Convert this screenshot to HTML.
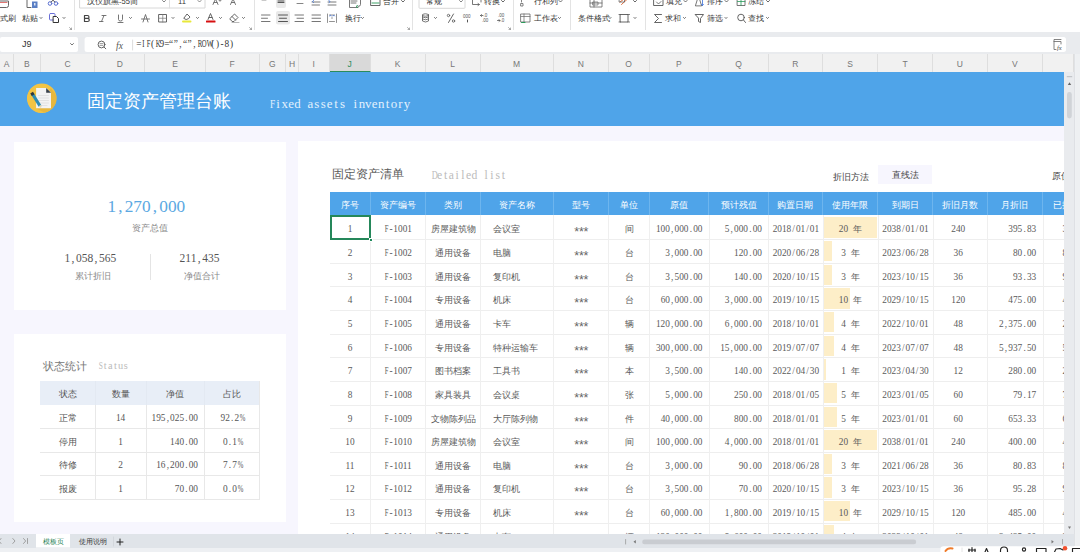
<!DOCTYPE html>
<html><head><meta charset="utf-8">
<style>
*{margin:0;padding:0;box-sizing:border-box}
html,body{width:1080px;height:552px;overflow:hidden;background:#fff;font-family:"Liberation Sans",sans-serif}
.a{position:absolute}
#tb{position:absolute;left:0;top:0;width:1080px;height:32px;background:#fff;overflow:hidden}
.tt{position:absolute;font-size:7.6px;color:#333;white-space:nowrap;line-height:12px}
.sep{position:absolute;top:0;width:1px;height:30px;background:#e3e3e3}
.dd{position:absolute;font-size:7px;color:#555;line-height:8px}
.ic{position:absolute}
#gband{position:absolute;left:0;top:32px;width:1080px;height:22px;background:#e9ebee}
#namebox{position:absolute;left:0;top:37px;width:78px;height:15px;background:#fff;border-radius:0 3px 3px 0}
#fbox{position:absolute;left:84.6px;top:37px;width:981px;height:15px;background:#fff;border-radius:3px}
#colhdr{position:absolute;left:0;top:54px;width:1074px;height:18px;background:#f1f1f1}
.ch{position:absolute;top:0;height:18px;border-right:1px solid #dedede;font-size:8.5px;color:#777;text-align:center;line-height:20px}
.ch.sel{background:#d9d9d9;color:#2a8c5c;border-bottom:1.5px solid #2a8c5c}
#sheet{position:absolute;left:0;top:72px;width:1064px;height:462px;background:#f7f6fe;overflow:hidden}
#banner{position:absolute;left:0;top:0;width:1064px;height:54px;background:#4fa4e9}
.card{position:absolute;background:#fff}
.th{position:absolute;background:#4fa4e9;color:#fff;font-size:9.3px;text-align:center;line-height:26px;border-right:1px solid #6db5ee;font-family:"Liberation Serif",serif}
.td{position:absolute;font-size:9.3px;color:#5a5a5a;line-height:28px;white-space:nowrap;overflow:hidden;font-family:"Liberation Serif",serif}
.td.c{text-align:center}
.td.l{text-align:left;padding-left:12px}
.td.r{text-align:right;padding-right:6.8px}
.td.w{text-align:left;padding-left:19.5px}
.m{font-family:"Liberation Serif",serif}
i.p{display:inline-block;width:0.5em;text-align:center;font-style:normal}
i.s{font-family:"Liberation Sans",sans-serif;position:relative;top:3px;font-size:12.5px;width:4.65px;color:#666}
i.gap{display:inline-block;width:5px}
i.u{transform:scaleX(0.72)}
.rline{position:absolute;left:329.5px;width:740px;height:1px;background:#eeeeee}
.vline{position:absolute;width:1px;background:#efefef}
.bar{position:absolute;background:#fdeec8}
.std{position:absolute;font-size:9.3px;color:#555;line-height:26px;white-space:nowrap;font-family:"Liberation Serif",serif}
.std.c{text-align:center}
.std.r{text-align:right;padding-right:6.8px}
.sthbg{position:absolute;background:#e8eef7}
.sline{position:absolute;height:1px;background:#e8e8e8}
.svline{position:absolute;width:1px;background:#e8e8e8}
#tabbar{position:absolute;left:0;top:534px;width:1074.3px;height:13.5px;background:#e0e4e9}
#bstrip{position:absolute;left:0;top:547.5px;width:1080px;height:4.5px;background:#eef0f3}
#vscroll{position:absolute;left:1064px;top:54px;width:16px;height:480px;background:#e9ebef}
</style></head><body>
<div id="tb">
  <div class="sep" style="left:74.0px"></div>
  <div class="sep" style="left:254.0px"></div>
  <div class="sep" style="left:412.0px"></div>
  <div class="sep" style="left:513.0px"></div>
  <div class="sep" style="left:570.0px"></div>
  <div class="sep" style="left:645.0px"></div>
<svg class="a" style="left:0;top:0" width="1080" height="32" viewBox="0 0 1080 32" fill="none" stroke-linecap="round" stroke-linejoin="round">
<!-- format painter -->
<path d="M0 1 H8.5 V5.5 Q8.5 7.5 6.5 7.5 H0" stroke="#666" stroke-width="1"/>
<path d="M0 2.5 H7" stroke="#d9534f" stroke-width="0.8"/>
<!-- paste -->
<path d="M27 0 V7.5 H31" stroke="#666" stroke-width="1"/>
<rect x="32" y="1.5" width="5.5" height="6.5" fill="#5b7fc4"/>
<rect x="34.2" y="3" width="1.2" height="2.5" fill="#fff"/>
<!-- scissors -->
<circle cx="50" cy="3.5" r="1.8" stroke="#5a6fd0" stroke-width="1"/>
<circle cx="56" cy="3.5" r="1.8" stroke="#5a6fd0" stroke-width="1"/>
<path d="M51 2 L54.5 -1 M55 2 L51.5 -1" stroke="#555" stroke-width="0.9"/>
<!-- copy -->
<rect x="49.5" y="13.5" width="5.5" height="6.5" rx="1" stroke="#6a6fd8" stroke-width="1"/>
<path d="M53.5 16.5 H56.5 L58.5 18.5 V22.5 H53.5 Z" stroke="#333" stroke-width="1" fill="#fff"/>
<path d="M63 17.5 L64 18.5 L65 17.5" stroke="#555" stroke-width="0.9"/>
<path d="M40 17.5 L41 18.5 L42 17.5" stroke="#555" stroke-width="0.9"/>
<path d="M69.5 27.5 L71.5 29.5 M71.5 28 V29.5 H70" stroke="#888" stroke-width="0.7"/>
<!-- font box -->
<path d="M79.6 -2 V8 H205 V-2" stroke="#d8d8d8" stroke-width="1"/>
<path d="M169.5 -2 V8" stroke="#e0e0e0" stroke-width="1"/>
<path d="M162.5 0.5 L164 2 L165.5 0.5" stroke="#777" stroke-width="0.9"/>
<path d="M198 0.5 L199.5 2 L201 0.5" stroke="#777" stroke-width="0.9"/>
<!-- A+ A- -->
<path d="M213 4.5 L215.5 -1 L218 4.5 M214 2.5 H217" stroke="#666" stroke-width="0.9"/>
<path d="M219 0.5 H221 M220 -0.5 V1.5" stroke="#666" stroke-width="0.6"/>
<path d="M230.5 4.5 L233 -1 L235.5 4.5 M231.5 2.5 H234.5" stroke="#666" stroke-width="0.9"/>
<!-- B I U -->
<path d="M84.5 15.5 H87.5 Q89 15.5 89 17.2 Q89 18.3 87.5 18.3 H84.5 M87.5 18.3 Q89.3 18.3 89.3 20 Q89.3 21.5 87.5 21.5 H84.5 V15.5" stroke="#444" stroke-width="1.2"/>
<path d="M102 15.5 H106 M104 15.5 L101.5 21.5 M99.5 21.5 H103" stroke="#666" stroke-width="0.9"/>
<path d="M118.5 15 V19.5 Q118.5 21 120.5 21 Q122.5 21 122.5 19.5 V15 M118 22.5 H123" stroke="#666" stroke-width="0.9"/>
<path d="M129.5 17.5 L130.5 18.5 L131.5 17.5" stroke="#555" stroke-width="0.9"/>
<path d="M143 22 L145.5 14.5 L148 22 M141.5 19 H149.5" stroke="#666" stroke-width="0.9"/>
<rect x="159" y="14.5" width="7.5" height="7.5" stroke="#555" stroke-width="0.9"/>
<path d="M162.75 14.5 V22 M159 18.25 H166.5" stroke="#777" stroke-width="0.7"/>
<path d="M172 17.5 L173 18.5 L174 17.5" stroke="#555" stroke-width="0.9"/>
<!-- fill color -->
<path d="M184 18 L187 14 L190 17 Q189 19 186.5 19.5 Z" stroke="#555" stroke-width="0.9"/>
<rect x="182" y="20.5" width="9.5" height="2" rx="1" fill="#e8e83a"/>
<path d="M196.5 17.5 L197.5 18.5 L198.5 17.5" stroke="#555" stroke-width="0.9"/>
<!-- font color -->
<path d="M208 19.5 L210.5 13.5 L213 19.5 M209 17.5 H212" stroke="#555" stroke-width="0.9"/>
<rect x="206" y="20.5" width="9.5" height="2" rx="0.5" fill="#d60f10"/>
<path d="M219.5 17.5 L220.5 18.5 L221.5 17.5" stroke="#555" stroke-width="0.9"/>
<!-- eraser -->
<path d="M230 18.5 L234.5 14 L238 17.5 L234 21.5 H232.5 Z M232 16.5 L235.5 20" stroke="#555" stroke-width="0.9"/>
<path d="M232 22.5 H239" stroke="#999" stroke-width="0.7"/>
<path d="M242.5 17.5 L243.5 18.5 L244.5 17.5" stroke="#555" stroke-width="0.9"/>
<path d="M249.5 27.5 L251.5 29.5 M251.5 28 V29.5 H250" stroke="#888" stroke-width="0.7"/>
<!-- align row 1 -->
<rect x="276" y="-3" width="10" height="11" rx="2" fill="#e9e9e9"/>
<path d="M262 0 H266" stroke="#888" stroke-width="0.9"/>
<path d="M278 1 H284 M278 2.5 H284" stroke="#555" stroke-width="1"/>
<path d="M297 3.5 H303" stroke="#777" stroke-width="0.9"/>
<path d="M312 2 H320 M312 5 H319.5" stroke="#555" stroke-width="0.8"/>
<path d="M313.5 0.5 L312.5 1.5 L313.5 2.5" stroke="#3a6fd8" stroke-width="0.9"/>
<path d="M328 2 H336 M328 5 H336" stroke="#555" stroke-width="0.8"/>
<path d="M329 0.5 L330 1.5 L329 2.5" stroke="#3a6fd8" stroke-width="0.9"/>
<path d="M349.5 -1 V7.5 H358 M351 1 H357 M351 3 H356 M360.5 -1 V4.5 Q360.5 6.5 358 6.5" stroke="#555" stroke-width="0.8"/>
<path d="M357.5 5.5 L356 6.5 L357.5 7.5" stroke="#2a9a5a" stroke-width="0.9"/>
<rect x="371" y="-2" width="9" height="7.5" stroke="#555" stroke-width="0.9"/>
<path d="M372 3 H379" stroke="#2a9a5a" stroke-width="0.9"/>
<path d="M401.5 0.5 L403 2 L404.5 0.5" stroke="#555" stroke-width="0.9"/>
<!-- align row 2 -->
<rect x="276" y="11" width="14" height="13.5" rx="2" fill="#e9e9e9"/>
<path d="M261.5 15 H270 M261.5 18.25 H267.5 M261.5 21.5 H270" stroke="#666" stroke-width="0.9"/>
<path d="M278.5 15 H287.5 M279.5 18.25 H286.5 M278.5 21.5 H287.5" stroke="#555" stroke-width="1"/>
<path d="M295 15 H303.5 M297 18.25 H303.5 M295 21.5 H303.5" stroke="#666" stroke-width="0.9"/>
<path d="M312 15 H320.5 M312 18.25 H320.5 M312 21.5 H320.5" stroke="#666" stroke-width="0.9"/>
<path d="M327.5 14 V22.5 M336.5 14 V22.5 M329.5 15 H334.5 M329.5 21.5 H334.5 M331.5 18 H332.5" stroke="#777" stroke-width="0.8"/>
<path d="M329.5 16 L330.5 15 L331 16 M334.5 16 L333.5 15 L333 16" stroke="#3a6fd8" stroke-width="0.7"/>
<path d="M361.5 17.5 L362.5 18.5 L363.5 17.5" stroke="#555" stroke-width="0.9"/>
<path d="M407.5 27.5 L409.5 29.5 M409.5 28 V29.5 H408" stroke="#888" stroke-width="0.7"/>
<!-- number format box -->
<path d="M419 -2 V7.5 Q419 8.3 420 8.3 H464 Q465 8.3 465 7.5 V-2" stroke="#d8d8d8" stroke-width="1"/>
<path d="M459.5 0.5 L461 2 L462.5 0.5" stroke="#777" stroke-width="0.9"/>
<path d="M472.5 -1 V4.5 H479 M478 3.5 L479.5 4.5 L478 5.5 M481 -1 V2" stroke="#555" stroke-width="0.8"/>
<path d="M501.5 0.5 L503 2 L504.5 0.5" stroke="#555" stroke-width="0.9"/>
<!-- number row 2 -->
<ellipse cx="425.5" cy="15" rx="3" ry="1.2" stroke="#555" stroke-width="0.8"/>
<path d="M422.5 15 V21 Q425.5 23 428.5 21 V15 M422.5 17 Q425.5 18.8 428.5 17 M422.5 19 Q425.5 20.8 428.5 19" stroke="#555" stroke-width="0.8"/>
<path d="M434.5 17.5 L435.5 18.5 L436.5 17.5" stroke="#555" stroke-width="0.9"/>
<circle cx="448.5" cy="15.5" r="1.2" stroke="#555" stroke-width="0.8"/>
<circle cx="453.5" cy="21" r="1.2" stroke="#555" stroke-width="0.8"/>
<path d="M453.5 14 L448.5 22.5" stroke="#555" stroke-width="0.9"/>
<text x="463" y="17.5" font-size="4.5" fill="#555" font-family="Liberation Sans">000</text>
<path d="M467.5 20 V22" stroke="#555" stroke-width="1"/>
<path d="M480.5 15.5 H483 M481.5 14.5 L480.5 15.5 L481.5 16.5" stroke="#555" stroke-width="0.8"/><text x="483.5" y="17" font-size="4.5" fill="#555" font-family="Liberation Sans">.0</text>
<text x="482" y="22" font-size="4.5" fill="#555" font-family="Liberation Sans">.00</text>
<text x="498" y="17" font-size="4.5" fill="#555" font-family="Liberation Sans">.00</text>
<path d="M497.5 20.5 H500 M499 19.5 L500 20.5 L499 21.5" stroke="#555" stroke-width="0.8"/><text x="500.5" y="22" font-size="4.5" fill="#555" font-family="Liberation Sans">.0</text>
<path d="M508.5 27.5 L510.5 29.5 M510.5 28 V29.5 H509" stroke="#888" stroke-width="0.7"/>
<!-- rows/cols + sheet -->
<path d="M521.5 -1 V2 M521 3.5 H523 V6 H521 Z" stroke="#666" stroke-width="0.8"/>
<path d="M559 0.5 L560.5 2 L562 0.5" stroke="#555" stroke-width="0.9"/>
<rect x="521" y="14" width="9" height="8" stroke="#666" stroke-width="0.8"/>
<path d="M521 16.5 H530 M524 14 V22" stroke="#666" stroke-width="0.7"/>
<path d="M521.5 22.5 H525" stroke="#2a9a5a" stroke-width="1"/>
<path d="M558.5 17.5 L559.5 18.5 L560.5 17.5" stroke="#555" stroke-width="0.9"/>
<!-- conditional format -->
<path d="M590 -1 V7 H602 V-1 M590 3 H602 M594 -1 V7" stroke="#666" stroke-width="0.8"/>
<rect x="593" y="2" width="5" height="3" stroke="#666" stroke-width="0.7"/>
<path d="M609 17.5 L610 18.5 L611 17.5" stroke="#555" stroke-width="0.9"/>
<path d="M620 2 L624 -1 M621.5 4.5 L627.5 -1" stroke="#e07040" stroke-width="1"/>
<rect x="619.5" y="-1" width="5" height="3" stroke="#555" stroke-width="0.7"/>
<path d="M633.5 0.5 L635 2 L636.5 0.5" stroke="#555" stroke-width="0.9"/>
<rect x="620.5" y="14.5" width="7.5" height="7.5" stroke="#555" stroke-width="0.9"/>
<path d="M619 14.5 H620.5 M628 14.5 H629.5 M619 22 H620.5 M628 22 H629.5" stroke="#555" stroke-width="0.8"/>
<path d="M634 17.5 L635 18.5 L636 17.5" stroke="#555" stroke-width="0.9"/>
<!-- fill, sort, freeze -->
<rect x="654" y="-2" width="9" height="7.5" stroke="#555" stroke-width="0.9"/>
<path d="M656.5 2 L658.5 4 L661 1.5" stroke="#555" stroke-width="0.8"/>
<path d="M684 0.5 L685.5 2 L687 0.5" stroke="#555" stroke-width="0.9"/>
<path d="M695.5 5.5 L697.5 -1 H699.5 L701.5 5.5 Z" stroke="#555" stroke-width="0.8"/>
<path d="M702.5 -1 V5.5 M701.5 4.5 L702.5 5.5 L703.5 4.5" stroke="#3a6fd8" stroke-width="0.8"/>
<path d="M725 0.5 L726.5 2 L728 0.5" stroke="#555" stroke-width="0.9"/>
<rect x="737.5" y="-2" width="7.5" height="7.5" stroke="#555" stroke-width="0.8"/>
<path d="M737.5 1.5 H745 M741 -2 V5.5" stroke="#2a9a5a" stroke-width="0.8"/>
<path d="M766.5 0.5 L768 2 L769.5 0.5" stroke="#555" stroke-width="0.9"/>
<!-- sum filter find -->
<path d="M661.5 14.5 H654.5 L658.5 18.5 L654.5 22.5 H661.5" stroke="#555" stroke-width="0.9"/>
<path d="M683.5 17.5 L684.5 18.5 L685.5 17.5" stroke="#555" stroke-width="0.9"/>
<path d="M695.5 14.5 H703.5 L700.5 18.5 V22.5 L698.5 21.5 V18.5 Z" stroke="#555" stroke-width="0.9"/>
<path d="M725 17.5 L726 18.5 L727 17.5" stroke="#555" stroke-width="0.9"/>
<circle cx="741" cy="17.5" r="3.3" stroke="#555" stroke-width="0.9"/>
<path d="M743.5 20 L745.5 22.5" stroke="#555" stroke-width="0.9"/>
<path d="M766.5 17.5 L767.5 18.5 L768.5 17.5" stroke="#555" stroke-width="0.9"/>
</svg>

  <div class="tt" style="left:0px;top:12.5px">式刷</div>
  <div class="tt" style="left:22px;top:12.5px">粘贴</div>
  <div class="tt" style="left:345px;top:12.5px">换行</div>
  <div class="tt" style="left:533.5px;top:12.5px">工作表</div>
  <div class="tt" style="left:578px;top:12.5px">条件格式</div>
  <div class="tt" style="left:665px;top:12.5px">求和</div>
  <div class="tt" style="left:707px;top:12.5px">筛选</div>
  <div class="tt" style="left:748px;top:12.5px">查找</div>
  <div class="tt" style="left:382.5px;top:-4.5px">合并</div>
  <div class="tt" style="left:426px;top:-4.5px">常规</div>
  <div class="tt" style="left:484px;top:-4.5px">转换</div>
  <div class="tt" style="left:533.5px;top:-4.5px">行和列</div>
  <div class="tt" style="left:665.5px;top:-4.5px">填充</div>
  <div class="tt" style="left:707px;top:-4.5px">排序</div>
  <div class="tt" style="left:748px;top:-4.5px">冻结</div>
  <div class="tt" style="left:87px;top:-4.5px">汉仪旗黑-55简</div>
  <div class="tt" style="left:178px;top:-4.5px">11</div>
</div>
<div id="gband"></div>
<div id="namebox" style="background:transparent;z-index:2"><div class="a" style="left:22px;top:1px;font-size:9px;color:#333;line-height:13px">J9</div></div>
<svg class="a" style="left:0;top:32px" width="1080" height="22" viewBox="0 32 1080 22" fill="none" stroke-linecap="round" stroke-linejoin="round">
<rect x="0" y="37" width="78" height="15" rx="2" fill="#fff"/>
<rect x="84.6" y="37" width="981.4" height="15" rx="2.5" fill="#fff"/>
<path d="M70.5 43.5 L72 45 L73.5 43.5" stroke="#666" stroke-width="0.9"/>
<circle cx="101.5" cy="44.5" r="3.4" stroke="#555" stroke-width="0.9"/>
<path d="M100 43.6 H103 M100 45.4 H103" stroke="#555" stroke-width="0.6"/>
<path d="M104 47 L105.8 48.8" stroke="#555" stroke-width="0.9"/>
<text x="116" y="48.5" font-size="9.5" font-style="italic" fill="#555" font-family="Liberation Serif">fx</text>
<path d="M132.6 40 V50" stroke="#ddd" stroke-width="1"/>
<path d="M1061 39.5 H1054 V49.5 H1056" stroke="#666" stroke-width="0.8"/>
<path d="M1054 41.5 H1061 V44" stroke="#666" stroke-width="0.8"/>
<text x="1057" y="50" font-size="6.5" font-style="italic" fill="#444" font-family="Liberation Serif">fx</text>
</svg>
<div id="fbox" style="background:transparent"><div class="a" style="left:51.7px;top:1px;font-size:9.3px;color:#333;line-height:13px;font-family:'Liberation Serif',serif;white-space:nowrap"><i class="p">=</i><i class="p u">I</i><i class="p u">F</i><i class="p">(</i><i class="p u">K</i>9<i class="p">=</i><i class="p">“</i><i class="p">”</i><i class="p">,</i><i class="p">“</i><i class="p">”</i><i class="p">,</i><i class="p u">R</i><i class="p u">O</i><i class="p u">W</i><i class="p">(</i><i class="p">)</i><i class="p">-</i>8<i class="p">)</i></div></div>
<div id="colhdr">
<div class="ch" style="left:0.00px;width:14.00px">A</div>
<div class="ch" style="left:14.00px;width:26.60px">B</div>
<div class="ch" style="left:40.60px;width:54.80px">C</div>
<div class="ch" style="left:95.40px;width:50.10px">D</div>
<div class="ch" style="left:145.50px;width:60.00px">E</div>
<div class="ch" style="left:205.50px;width:54.00px">F</div>
<div class="ch" style="left:259.50px;width:26.50px">G</div>
<div class="ch" style="left:286.00px;width:13.00px">H</div>
<div class="ch" style="left:299.00px;width:30.50px">I</div>
<div class="ch sel" style="left:329.50px;width:41.25px">J</div>
<div class="ch" style="left:370.75px;width:54.75px">K</div>
<div class="ch" style="left:425.50px;width:55.00px">L</div>
<div class="ch" style="left:480.50px;width:73.25px">M</div>
<div class="ch" style="left:553.75px;width:55.00px">N</div>
<div class="ch" style="left:608.75px;width:40.75px">O</div>
<div class="ch" style="left:649.50px;width:59.75px">P</div>
<div class="ch" style="left:709.25px;width:59.50px">Q</div>
<div class="ch" style="left:768.75px;width:54.25px">R</div>
<div class="ch" style="left:823.00px;width:55.00px">S</div>
<div class="ch" style="left:878.00px;width:55.00px">T</div>
<div class="ch" style="left:933.00px;width:54.50px">U</div>
<div class="ch" style="left:987.50px;width:55.50px">V</div>
<div class="ch" style="left:1043.00px;width:31.00px"></div>
</div>
<div id="sheet">
  <div id="banner">
    <div class="a" style="left:27px;top:12px;width:29px;height:29px;border-radius:50%;background:#f1c250"></div>
    <div class="a" style="left:87px;top:17.5px;font-size:18.2px;color:#fff;line-height:22px;font-family:'Liberation Serif',serif">固定资产管理台账</div>
    <div class="a" style="left:268.5px;top:24.5px;font-size:12.9px;color:#e3f1fd;line-height:14px;font-family:'Liberation Serif',serif;white-space:nowrap"><i class="p u">F</i><i class="p">i</i><i class="p">x</i><i class="p">e</i><i class="p">d</i><i class="p"> </i><i class="p">a</i><i class="p">s</i><i class="p">s</i><i class="p">e</i><i class="p">t</i><i class="p">s</i><i class="p"> </i><i class="p">i</i><i class="p">n</i><i class="p">v</i><i class="p">e</i><i class="p">n</i><i class="p">t</i><i class="p">o</i><i class="p">r</i><i class="p">y</i></div>
  </div>
  <div class="card" style="left:14px;top:70px;width:272px;height:168px"></div>
  <div class="card" style="left:14px;top:261.5px;width:272px;height:188.5px"></div>
  <div class="card" style="left:298px;top:69px;width:800px;height:400px"></div>
</div>
<!-- card 1 content -->
<div class="a" style="left:107.4px;top:197px;font-size:17.3px;color:#5ba8e2;line-height:20px;font-family:'Liberation Serif',serif;white-space:nowrap">1<i class="p">,</i>270<i class="p">,</i>000</div>
<div class="a" style="left:100px;top:222.3px;width:100px;text-align:center;font-size:8.6px;color:#888;line-height:12px">资产总值</div>
<div class="a" style="left:64.4px;top:251px;font-size:11.5px;color:#555;line-height:14px;font-family:'Liberation Serif',serif;white-space:nowrap">1<i class="p">,</i>058<i class="p">,</i>565</div>
<div class="a" style="left:179.6px;top:251px;font-size:11.5px;color:#555;line-height:14px;font-family:'Liberation Serif',serif;white-space:nowrap">211<i class="p">,</i>435</div>
<div class="a" style="left:42.7px;top:269.6px;width:100px;text-align:center;font-size:8.6px;color:#888;line-height:12px">累计折旧</div>
<div class="a" style="left:152.2px;top:269.6px;width:100px;text-align:center;font-size:8.6px;color:#888;line-height:12px">净值合计</div>
<div class="a" style="left:149.5px;top:254px;width:1px;height:26px;background:#e4e4e4"></div>
<!-- status title -->
<div class="a" style="left:43px;top:359px;font-size:11.2px;color:#777;line-height:14px;font-family:'Liberation Serif',serif">状态统计</div>
<div class="a" style="left:97.5px;top:360px;font-size:10.3px;color:#bbb;line-height:12px;font-family:'Liberation Serif',serif;white-space:nowrap"><i class="p u">S</i><i class="p">t</i><i class="p">a</i><i class="p">t</i><i class="p">u</i><i class="p">s</i></div>
<!-- list title -->
<div class="a" style="left:332px;top:167px;font-size:12.1px;color:#5a5a5a;line-height:14px;font-family:'Liberation Serif',serif">固定资产清单</div>
<div class="a" style="left:431px;top:168.7px;font-size:11.6px;color:#bbb;line-height:14px;font-family:'Liberation Serif',serif;white-space:nowrap"><i class="p u">D</i><i class="p">e</i><i class="p">t</i><i class="p">a</i><i class="p">i</i><i class="p">l</i><i class="p">e</i><i class="p">d</i><i class="p"> </i><i class="p">l</i><i class="p">i</i><i class="p">s</i><i class="p">t</i></div>
<div class="a" style="left:833px;top:170.5px;font-size:9px;color:#444;line-height:12px">折旧方法</div>
<div class="a" style="left:878px;top:165px;width:54px;height:19px;background:#f7f6fe"></div>
<div class="a" style="left:878px;top:169px;width:54px;text-align:center;font-size:9.3px;color:#444;line-height:12px">直线法</div>
<div class="a" style="left:1052px;top:170px;font-size:9.3px;color:#444;line-height:12px">原值</div>
<div class="a" style="left:0;top:0;width:1064px;height:534px;overflow:hidden">
<div class="sthbg" style="left:40px;top:381.3px;width:219.60000000000002px;height:23.69999999999999px"></div>
<div class="std c hd" style="left:40px;top:381.3px;width:55.20px;height:23.70px">状态</div>
<div class="std c hd" style="left:95.2px;top:381.3px;width:50.80px;height:23.70px">数量</div>
<div class="std c hd" style="left:146px;top:381.3px;width:58.80px;height:23.70px">净值</div>
<div class="std c hd" style="left:204.8px;top:381.3px;width:54.80px;height:23.70px">占比</div>
<div class="std c" style="left:40px;top:405.00px;width:55.20px;height:23.60px">正常</div>
<div class="std c" style="left:95.2px;top:405.00px;width:50.80px;height:23.60px"><span class="m">14</span></div>
<div class="std r" style="left:146px;top:405.00px;width:58.80px;height:23.60px"><span class="m">195<i class="p">,</i>025<i class="p">.</i>00</span></div>
<div class="std c" style="left:204.8px;top:405.00px;width:54.80px;height:23.60px"><span class="m">92<i class="p">.</i>2<i class="p u">%</i></span></div>
<div class="sline" style="left:40px;top:428.10px;width:219.60000000000002px"></div>
<div class="std c" style="left:40px;top:428.60px;width:55.20px;height:23.60px">停用</div>
<div class="std c" style="left:95.2px;top:428.60px;width:50.80px;height:23.60px"><span class="m">1</span></div>
<div class="std r" style="left:146px;top:428.60px;width:58.80px;height:23.60px"><span class="m">140<i class="p">.</i>00</span></div>
<div class="std c" style="left:204.8px;top:428.60px;width:54.80px;height:23.60px"><span class="m">0<i class="p">.</i>1<i class="p u">%</i></span></div>
<div class="sline" style="left:40px;top:451.70px;width:219.60000000000002px"></div>
<div class="std c" style="left:40px;top:452.20px;width:55.20px;height:23.60px">待修</div>
<div class="std c" style="left:95.2px;top:452.20px;width:50.80px;height:23.60px"><span class="m">2</span></div>
<div class="std r" style="left:146px;top:452.20px;width:58.80px;height:23.60px"><span class="m">16<i class="p">,</i>200<i class="p">.</i>00</span></div>
<div class="std c" style="left:204.8px;top:452.20px;width:54.80px;height:23.60px"><span class="m">7<i class="p">.</i>7<i class="p u">%</i></span></div>
<div class="sline" style="left:40px;top:475.30px;width:219.60000000000002px"></div>
<div class="std c" style="left:40px;top:475.80px;width:55.20px;height:23.60px">报废</div>
<div class="std c" style="left:95.2px;top:475.80px;width:50.80px;height:23.60px"><span class="m">1</span></div>
<div class="std r" style="left:146px;top:475.80px;width:58.80px;height:23.60px"><span class="m">70<i class="p">.</i>00</span></div>
<div class="std c" style="left:204.8px;top:475.80px;width:54.80px;height:23.60px"><span class="m">0<i class="p">.</i>0<i class="p u">%</i></span></div>
<div class="sline" style="left:40px;top:498.90px;width:219.60000000000002px"></div>
<div class="svline" style="left:94.70px;top:405.0px;height:94.40px"></div>
<div class="svline" style="left:94.70px;top:381.3px;height:23.70px;background:#e3e9f2"></div>
<div class="svline" style="left:145.50px;top:405.0px;height:94.40px"></div>
<div class="svline" style="left:145.50px;top:381.3px;height:23.70px;background:#e3e9f2"></div>
<div class="svline" style="left:204.30px;top:405.0px;height:94.40px"></div>
<div class="svline" style="left:204.30px;top:381.3px;height:23.70px;background:#e3e9f2"></div>
<div class="svline" style="left:259.10px;top:381.3px;height:118.10px"></div>
<div class="th" style="left:329.50px;top:192.3px;width:41.00px;height:23.00px">序号</div>
<div class="th" style="left:370.50px;top:192.3px;width:55.00px;height:23.00px">资产编号</div>
<div class="th" style="left:425.50px;top:192.3px;width:55.00px;height:23.00px">类别</div>
<div class="th" style="left:480.50px;top:192.3px;width:73.25px;height:23.00px">资产名称</div>
<div class="th" style="left:553.75px;top:192.3px;width:55.00px;height:23.00px">型号</div>
<div class="th" style="left:608.75px;top:192.3px;width:40.75px;height:23.00px">单位</div>
<div class="th" style="left:649.50px;top:192.3px;width:59.75px;height:23.00px">原值</div>
<div class="th" style="left:709.25px;top:192.3px;width:59.50px;height:23.00px">预计残值</div>
<div class="th" style="left:768.75px;top:192.3px;width:54.25px;height:23.00px">购置日期</div>
<div class="th" style="left:823.00px;top:192.3px;width:55.00px;height:23.00px">使用年限</div>
<div class="th" style="left:878.00px;top:192.3px;width:55.00px;height:23.00px">到期日</div>
<div class="th" style="left:933.00px;top:192.3px;width:54.50px;height:23.00px">折旧月数</div>
<div class="th" style="left:987.50px;top:192.3px;width:55.50px;height:23.00px">月折旧</div>
<div class="th" style="left:1043.00px;top:192.3px;width:57.00px;height:23.00px">已提折旧</div>
<div class="rline" style="top:238.95px"></div>
<div class="td c" style="left:329.50px;top:215.30px;width:41.00px;height:23.65px"><span class="m">1</span></div>
<div class="td c" style="left:370.50px;top:215.30px;width:55.00px;height:23.65px"><span class="m"><i class="p u">F</i><i class="p">-</i>1001</span></div>
<div class="td c" style="left:425.50px;top:215.30px;width:55.00px;height:23.65px">房屋建筑物</div>
<div class="td l" style="left:480.50px;top:215.30px;width:73.25px;height:23.65px">会议室</div>
<div class="td c" style="left:553.75px;top:215.30px;width:55.00px;height:23.65px"><span class="m"><i class="p s">*</i><i class="p s">*</i><i class="p s">*</i></span></div>
<div class="td c" style="left:608.75px;top:215.30px;width:40.75px;height:23.65px">间</div>
<div class="td r" style="left:649.50px;top:215.30px;width:59.75px;height:23.65px"><span class="m">100<i class="p">,</i>000<i class="p">.</i>00</span></div>
<div class="td r" style="left:709.25px;top:215.30px;width:59.50px;height:23.65px"><span class="m">5<i class="p">,</i>000<i class="p">.</i>00</span></div>
<div class="td c" style="left:768.75px;top:215.30px;width:54.25px;height:23.65px"><span class="m">2018<i class="p">/</i>01<i class="p">/</i>01</span></div>
<div class="bar" style="left:823.70px;top:217.30px;width:53.00px;height:20.35px"></div>
<div class="td c" style="left:823.00px;top:215.30px;width:55.00px;height:23.65px"><span class="m">20</span><i class="gap"></i>年</div>
<div class="td c" style="left:878.00px;top:215.30px;width:55.00px;height:23.65px"><span class="m">2038<i class="p">/</i>01<i class="p">/</i>01</span></div>
<div class="td c" style="left:931.00px;top:215.30px;width:54.50px;height:23.65px"><span class="m">240</span></div>
<div class="td r" style="left:987.50px;top:215.30px;width:55.50px;height:23.65px"><span class="m">395<i class="p">.</i>83</span></div>
<div class="td w" style="left:1043.00px;top:215.30px;width:57.00px;height:23.65px"><span class="m">3</span></div>
<div class="rline" style="top:262.60px"></div>
<div class="td c" style="left:329.50px;top:238.95px;width:41.00px;height:23.65px"><span class="m">2</span></div>
<div class="td c" style="left:370.50px;top:238.95px;width:55.00px;height:23.65px"><span class="m"><i class="p u">F</i><i class="p">-</i>1002</span></div>
<div class="td c" style="left:425.50px;top:238.95px;width:55.00px;height:23.65px">通用设备</div>
<div class="td l" style="left:480.50px;top:238.95px;width:73.25px;height:23.65px">电脑</div>
<div class="td c" style="left:553.75px;top:238.95px;width:55.00px;height:23.65px"><span class="m"><i class="p s">*</i><i class="p s">*</i><i class="p s">*</i></span></div>
<div class="td c" style="left:608.75px;top:238.95px;width:40.75px;height:23.65px">台</div>
<div class="td r" style="left:649.50px;top:238.95px;width:59.75px;height:23.65px"><span class="m">3<i class="p">,</i>000<i class="p">.</i>00</span></div>
<div class="td r" style="left:709.25px;top:238.95px;width:59.50px;height:23.65px"><span class="m">120<i class="p">.</i>00</span></div>
<div class="td c" style="left:768.75px;top:238.95px;width:54.25px;height:23.65px"><span class="m">2020<i class="p">/</i>06<i class="p">/</i>28</span></div>
<div class="bar" style="left:823.70px;top:240.95px;width:7.95px;height:20.35px"></div>
<div class="td c" style="left:823.00px;top:238.95px;width:55.00px;height:23.65px"><span class="m">3</span><i class="gap"></i>年</div>
<div class="td c" style="left:878.00px;top:238.95px;width:55.00px;height:23.65px"><span class="m">2023<i class="p">/</i>06<i class="p">/</i>28</span></div>
<div class="td c" style="left:931.00px;top:238.95px;width:54.50px;height:23.65px"><span class="m">36</span></div>
<div class="td r" style="left:987.50px;top:238.95px;width:55.50px;height:23.65px"><span class="m">80<i class="p">.</i>00</span></div>
<div class="td w" style="left:1043.00px;top:238.95px;width:57.00px;height:23.65px"><span class="m">8</span></div>
<div class="rline" style="top:286.25px"></div>
<div class="td c" style="left:329.50px;top:262.60px;width:41.00px;height:23.65px"><span class="m">3</span></div>
<div class="td c" style="left:370.50px;top:262.60px;width:55.00px;height:23.65px"><span class="m"><i class="p u">F</i><i class="p">-</i>1003</span></div>
<div class="td c" style="left:425.50px;top:262.60px;width:55.00px;height:23.65px">通用设备</div>
<div class="td l" style="left:480.50px;top:262.60px;width:73.25px;height:23.65px">复印机</div>
<div class="td c" style="left:553.75px;top:262.60px;width:55.00px;height:23.65px"><span class="m"><i class="p s">*</i><i class="p s">*</i><i class="p s">*</i></span></div>
<div class="td c" style="left:608.75px;top:262.60px;width:40.75px;height:23.65px">台</div>
<div class="td r" style="left:649.50px;top:262.60px;width:59.75px;height:23.65px"><span class="m">3<i class="p">,</i>500<i class="p">.</i>00</span></div>
<div class="td r" style="left:709.25px;top:262.60px;width:59.50px;height:23.65px"><span class="m">140<i class="p">.</i>00</span></div>
<div class="td c" style="left:768.75px;top:262.60px;width:54.25px;height:23.65px"><span class="m">2020<i class="p">/</i>10<i class="p">/</i>15</span></div>
<div class="bar" style="left:823.70px;top:264.60px;width:7.95px;height:20.35px"></div>
<div class="td c" style="left:823.00px;top:262.60px;width:55.00px;height:23.65px"><span class="m">3</span><i class="gap"></i>年</div>
<div class="td c" style="left:878.00px;top:262.60px;width:55.00px;height:23.65px"><span class="m">2023<i class="p">/</i>10<i class="p">/</i>15</span></div>
<div class="td c" style="left:931.00px;top:262.60px;width:54.50px;height:23.65px"><span class="m">36</span></div>
<div class="td r" style="left:987.50px;top:262.60px;width:55.50px;height:23.65px"><span class="m">93<i class="p">.</i>33</span></div>
<div class="td w" style="left:1043.00px;top:262.60px;width:57.00px;height:23.65px"><span class="m">9</span></div>
<div class="rline" style="top:309.90px"></div>
<div class="td c" style="left:329.50px;top:286.25px;width:41.00px;height:23.65px"><span class="m">4</span></div>
<div class="td c" style="left:370.50px;top:286.25px;width:55.00px;height:23.65px"><span class="m"><i class="p u">F</i><i class="p">-</i>1004</span></div>
<div class="td c" style="left:425.50px;top:286.25px;width:55.00px;height:23.65px">专用设备</div>
<div class="td l" style="left:480.50px;top:286.25px;width:73.25px;height:23.65px">机床</div>
<div class="td c" style="left:553.75px;top:286.25px;width:55.00px;height:23.65px"><span class="m"><i class="p s">*</i><i class="p s">*</i><i class="p s">*</i></span></div>
<div class="td c" style="left:608.75px;top:286.25px;width:40.75px;height:23.65px">台</div>
<div class="td r" style="left:649.50px;top:286.25px;width:59.75px;height:23.65px"><span class="m">60<i class="p">,</i>000<i class="p">.</i>00</span></div>
<div class="td r" style="left:709.25px;top:286.25px;width:59.50px;height:23.65px"><span class="m">3<i class="p">,</i>000<i class="p">.</i>00</span></div>
<div class="td c" style="left:768.75px;top:286.25px;width:54.25px;height:23.65px"><span class="m">2019<i class="p">/</i>10<i class="p">/</i>15</span></div>
<div class="bar" style="left:823.70px;top:288.25px;width:26.50px;height:20.35px"></div>
<div class="td c" style="left:823.00px;top:286.25px;width:55.00px;height:23.65px"><span class="m">10</span><i class="gap"></i>年</div>
<div class="td c" style="left:878.00px;top:286.25px;width:55.00px;height:23.65px"><span class="m">2029<i class="p">/</i>10<i class="p">/</i>15</span></div>
<div class="td c" style="left:931.00px;top:286.25px;width:54.50px;height:23.65px"><span class="m">120</span></div>
<div class="td r" style="left:987.50px;top:286.25px;width:55.50px;height:23.65px"><span class="m">475<i class="p">.</i>00</span></div>
<div class="td w" style="left:1043.00px;top:286.25px;width:57.00px;height:23.65px"><span class="m">4</span></div>
<div class="rline" style="top:333.55px"></div>
<div class="td c" style="left:329.50px;top:309.90px;width:41.00px;height:23.65px"><span class="m">5</span></div>
<div class="td c" style="left:370.50px;top:309.90px;width:55.00px;height:23.65px"><span class="m"><i class="p u">F</i><i class="p">-</i>1005</span></div>
<div class="td c" style="left:425.50px;top:309.90px;width:55.00px;height:23.65px">通用设备</div>
<div class="td l" style="left:480.50px;top:309.90px;width:73.25px;height:23.65px">卡车</div>
<div class="td c" style="left:553.75px;top:309.90px;width:55.00px;height:23.65px"><span class="m"><i class="p s">*</i><i class="p s">*</i><i class="p s">*</i></span></div>
<div class="td c" style="left:608.75px;top:309.90px;width:40.75px;height:23.65px">辆</div>
<div class="td r" style="left:649.50px;top:309.90px;width:59.75px;height:23.65px"><span class="m">120<i class="p">,</i>000<i class="p">.</i>00</span></div>
<div class="td r" style="left:709.25px;top:309.90px;width:59.50px;height:23.65px"><span class="m">6<i class="p">,</i>000<i class="p">.</i>00</span></div>
<div class="td c" style="left:768.75px;top:309.90px;width:54.25px;height:23.65px"><span class="m">2018<i class="p">/</i>10<i class="p">/</i>01</span></div>
<div class="bar" style="left:823.70px;top:311.90px;width:10.60px;height:20.35px"></div>
<div class="td c" style="left:823.00px;top:309.90px;width:55.00px;height:23.65px"><span class="m">4</span><i class="gap"></i>年</div>
<div class="td c" style="left:878.00px;top:309.90px;width:55.00px;height:23.65px"><span class="m">2022<i class="p">/</i>10<i class="p">/</i>01</span></div>
<div class="td c" style="left:931.00px;top:309.90px;width:54.50px;height:23.65px"><span class="m">48</span></div>
<div class="td r" style="left:987.50px;top:309.90px;width:55.50px;height:23.65px"><span class="m">2<i class="p">,</i>375<i class="p">.</i>00</span></div>
<div class="td w" style="left:1043.00px;top:309.90px;width:57.00px;height:23.65px"><span class="m">2</span></div>
<div class="rline" style="top:357.20px"></div>
<div class="td c" style="left:329.50px;top:333.55px;width:41.00px;height:23.65px"><span class="m">6</span></div>
<div class="td c" style="left:370.50px;top:333.55px;width:55.00px;height:23.65px"><span class="m"><i class="p u">F</i><i class="p">-</i>1006</span></div>
<div class="td c" style="left:425.50px;top:333.55px;width:55.00px;height:23.65px">专用设备</div>
<div class="td l" style="left:480.50px;top:333.55px;width:73.25px;height:23.65px">特种运输车</div>
<div class="td c" style="left:553.75px;top:333.55px;width:55.00px;height:23.65px"><span class="m"><i class="p s">*</i><i class="p s">*</i><i class="p s">*</i></span></div>
<div class="td c" style="left:608.75px;top:333.55px;width:40.75px;height:23.65px">辆</div>
<div class="td r" style="left:649.50px;top:333.55px;width:59.75px;height:23.65px"><span class="m">300<i class="p">,</i>000<i class="p">.</i>00</span></div>
<div class="td r" style="left:709.25px;top:333.55px;width:59.50px;height:23.65px"><span class="m">15<i class="p">,</i>000<i class="p">.</i>00</span></div>
<div class="td c" style="left:768.75px;top:333.55px;width:54.25px;height:23.65px"><span class="m">2019<i class="p">/</i>07<i class="p">/</i>07</span></div>
<div class="bar" style="left:823.70px;top:335.55px;width:10.60px;height:20.35px"></div>
<div class="td c" style="left:823.00px;top:333.55px;width:55.00px;height:23.65px"><span class="m">4</span><i class="gap"></i>年</div>
<div class="td c" style="left:878.00px;top:333.55px;width:55.00px;height:23.65px"><span class="m">2023<i class="p">/</i>07<i class="p">/</i>07</span></div>
<div class="td c" style="left:931.00px;top:333.55px;width:54.50px;height:23.65px"><span class="m">48</span></div>
<div class="td r" style="left:987.50px;top:333.55px;width:55.50px;height:23.65px"><span class="m">5<i class="p">,</i>937<i class="p">.</i>50</span></div>
<div class="td w" style="left:1043.00px;top:333.55px;width:57.00px;height:23.65px"><span class="m">5</span></div>
<div class="rline" style="top:380.85px"></div>
<div class="td c" style="left:329.50px;top:357.20px;width:41.00px;height:23.65px"><span class="m">7</span></div>
<div class="td c" style="left:370.50px;top:357.20px;width:55.00px;height:23.65px"><span class="m"><i class="p u">F</i><i class="p">-</i>1007</span></div>
<div class="td c" style="left:425.50px;top:357.20px;width:55.00px;height:23.65px">图书档案</div>
<div class="td l" style="left:480.50px;top:357.20px;width:73.25px;height:23.65px">工具书</div>
<div class="td c" style="left:553.75px;top:357.20px;width:55.00px;height:23.65px"><span class="m"><i class="p s">*</i><i class="p s">*</i><i class="p s">*</i></span></div>
<div class="td c" style="left:608.75px;top:357.20px;width:40.75px;height:23.65px">本</div>
<div class="td r" style="left:649.50px;top:357.20px;width:59.75px;height:23.65px"><span class="m">3<i class="p">,</i>500<i class="p">.</i>00</span></div>
<div class="td r" style="left:709.25px;top:357.20px;width:59.50px;height:23.65px"><span class="m">140<i class="p">.</i>00</span></div>
<div class="td c" style="left:768.75px;top:357.20px;width:54.25px;height:23.65px"><span class="m">2022<i class="p">/</i>04<i class="p">/</i>30</span></div>
<div class="bar" style="left:823.70px;top:359.20px;width:2.65px;height:20.35px"></div>
<div class="td c" style="left:823.00px;top:357.20px;width:55.00px;height:23.65px"><span class="m">1</span><i class="gap"></i>年</div>
<div class="td c" style="left:878.00px;top:357.20px;width:55.00px;height:23.65px"><span class="m">2023<i class="p">/</i>04<i class="p">/</i>30</span></div>
<div class="td c" style="left:931.00px;top:357.20px;width:54.50px;height:23.65px"><span class="m">12</span></div>
<div class="td r" style="left:987.50px;top:357.20px;width:55.50px;height:23.65px"><span class="m">280<i class="p">.</i>00</span></div>
<div class="td w" style="left:1043.00px;top:357.20px;width:57.00px;height:23.65px"><span class="m">2</span></div>
<div class="rline" style="top:404.50px"></div>
<div class="td c" style="left:329.50px;top:380.85px;width:41.00px;height:23.65px"><span class="m">8</span></div>
<div class="td c" style="left:370.50px;top:380.85px;width:55.00px;height:23.65px"><span class="m"><i class="p u">F</i><i class="p">-</i>1008</span></div>
<div class="td c" style="left:425.50px;top:380.85px;width:55.00px;height:23.65px">家具装具</div>
<div class="td l" style="left:480.50px;top:380.85px;width:73.25px;height:23.65px">会议桌</div>
<div class="td c" style="left:553.75px;top:380.85px;width:55.00px;height:23.65px"><span class="m"><i class="p s">*</i><i class="p s">*</i><i class="p s">*</i></span></div>
<div class="td c" style="left:608.75px;top:380.85px;width:40.75px;height:23.65px">张</div>
<div class="td r" style="left:649.50px;top:380.85px;width:59.75px;height:23.65px"><span class="m">5<i class="p">,</i>000<i class="p">.</i>00</span></div>
<div class="td r" style="left:709.25px;top:380.85px;width:59.50px;height:23.65px"><span class="m">250<i class="p">.</i>00</span></div>
<div class="td c" style="left:768.75px;top:380.85px;width:54.25px;height:23.65px"><span class="m">2018<i class="p">/</i>01<i class="p">/</i>05</span></div>
<div class="bar" style="left:823.70px;top:382.85px;width:13.25px;height:20.35px"></div>
<div class="td c" style="left:823.00px;top:380.85px;width:55.00px;height:23.65px"><span class="m">5</span><i class="gap"></i>年</div>
<div class="td c" style="left:878.00px;top:380.85px;width:55.00px;height:23.65px"><span class="m">2023<i class="p">/</i>01<i class="p">/</i>05</span></div>
<div class="td c" style="left:931.00px;top:380.85px;width:54.50px;height:23.65px"><span class="m">60</span></div>
<div class="td r" style="left:987.50px;top:380.85px;width:55.50px;height:23.65px"><span class="m">79<i class="p">.</i>17</span></div>
<div class="td w" style="left:1043.00px;top:380.85px;width:57.00px;height:23.65px"><span class="m">7</span></div>
<div class="rline" style="top:428.15px"></div>
<div class="td c" style="left:329.50px;top:404.50px;width:41.00px;height:23.65px"><span class="m">9</span></div>
<div class="td c" style="left:370.50px;top:404.50px;width:55.00px;height:23.65px"><span class="m"><i class="p u">F</i><i class="p">-</i>1009</span></div>
<div class="td c" style="left:425.50px;top:404.50px;width:55.00px;height:23.65px">文物陈列品</div>
<div class="td l" style="left:480.50px;top:404.50px;width:73.25px;height:23.65px">大厅陈列物</div>
<div class="td c" style="left:553.75px;top:404.50px;width:55.00px;height:23.65px"><span class="m"><i class="p s">*</i><i class="p s">*</i><i class="p s">*</i></span></div>
<div class="td c" style="left:608.75px;top:404.50px;width:40.75px;height:23.65px">件</div>
<div class="td r" style="left:649.50px;top:404.50px;width:59.75px;height:23.65px"><span class="m">40<i class="p">,</i>000<i class="p">.</i>00</span></div>
<div class="td r" style="left:709.25px;top:404.50px;width:59.50px;height:23.65px"><span class="m">800<i class="p">.</i>00</span></div>
<div class="td c" style="left:768.75px;top:404.50px;width:54.25px;height:23.65px"><span class="m">2018<i class="p">/</i>01<i class="p">/</i>01</span></div>
<div class="bar" style="left:823.70px;top:406.50px;width:13.25px;height:20.35px"></div>
<div class="td c" style="left:823.00px;top:404.50px;width:55.00px;height:23.65px"><span class="m">5</span><i class="gap"></i>年</div>
<div class="td c" style="left:878.00px;top:404.50px;width:55.00px;height:23.65px"><span class="m">2023<i class="p">/</i>01<i class="p">/</i>01</span></div>
<div class="td c" style="left:931.00px;top:404.50px;width:54.50px;height:23.65px"><span class="m">60</span></div>
<div class="td r" style="left:987.50px;top:404.50px;width:55.50px;height:23.65px"><span class="m">653<i class="p">.</i>33</span></div>
<div class="td w" style="left:1043.00px;top:404.50px;width:57.00px;height:23.65px"><span class="m">6</span></div>
<div class="rline" style="top:451.80px"></div>
<div class="td c" style="left:329.50px;top:428.15px;width:41.00px;height:23.65px"><span class="m">10</span></div>
<div class="td c" style="left:370.50px;top:428.15px;width:55.00px;height:23.65px"><span class="m"><i class="p u">F</i><i class="p">-</i>1010</span></div>
<div class="td c" style="left:425.50px;top:428.15px;width:55.00px;height:23.65px">房屋建筑物</div>
<div class="td l" style="left:480.50px;top:428.15px;width:73.25px;height:23.65px">会议室</div>
<div class="td c" style="left:553.75px;top:428.15px;width:55.00px;height:23.65px"><span class="m"><i class="p s">*</i><i class="p s">*</i><i class="p s">*</i></span></div>
<div class="td c" style="left:608.75px;top:428.15px;width:40.75px;height:23.65px">间</div>
<div class="td r" style="left:649.50px;top:428.15px;width:59.75px;height:23.65px"><span class="m">100<i class="p">,</i>000<i class="p">.</i>00</span></div>
<div class="td r" style="left:709.25px;top:428.15px;width:59.50px;height:23.65px"><span class="m">4<i class="p">,</i>000<i class="p">.</i>00</span></div>
<div class="td c" style="left:768.75px;top:428.15px;width:54.25px;height:23.65px"><span class="m">2018<i class="p">/</i>01<i class="p">/</i>01</span></div>
<div class="bar" style="left:823.70px;top:430.15px;width:53.00px;height:20.35px"></div>
<div class="td c" style="left:823.00px;top:428.15px;width:55.00px;height:23.65px"><span class="m">20</span><i class="gap"></i>年</div>
<div class="td c" style="left:878.00px;top:428.15px;width:55.00px;height:23.65px"><span class="m">2038<i class="p">/</i>01<i class="p">/</i>01</span></div>
<div class="td c" style="left:931.00px;top:428.15px;width:54.50px;height:23.65px"><span class="m">240</span></div>
<div class="td r" style="left:987.50px;top:428.15px;width:55.50px;height:23.65px"><span class="m">400<i class="p">.</i>00</span></div>
<div class="td w" style="left:1043.00px;top:428.15px;width:57.00px;height:23.65px"><span class="m">4</span></div>
<div class="rline" style="top:475.45px"></div>
<div class="td c" style="left:329.50px;top:451.80px;width:41.00px;height:23.65px"><span class="m">11</span></div>
<div class="td c" style="left:370.50px;top:451.80px;width:55.00px;height:23.65px"><span class="m"><i class="p u">F</i><i class="p">-</i>1011</span></div>
<div class="td c" style="left:425.50px;top:451.80px;width:55.00px;height:23.65px">通用设备</div>
<div class="td l" style="left:480.50px;top:451.80px;width:73.25px;height:23.65px">电脑</div>
<div class="td c" style="left:553.75px;top:451.80px;width:55.00px;height:23.65px"><span class="m"><i class="p s">*</i><i class="p s">*</i><i class="p s">*</i></span></div>
<div class="td c" style="left:608.75px;top:451.80px;width:40.75px;height:23.65px">台</div>
<div class="td r" style="left:649.50px;top:451.80px;width:59.75px;height:23.65px"><span class="m">3<i class="p">,</i>000<i class="p">.</i>00</span></div>
<div class="td r" style="left:709.25px;top:451.80px;width:59.50px;height:23.65px"><span class="m">90<i class="p">.</i>00</span></div>
<div class="td c" style="left:768.75px;top:451.80px;width:54.25px;height:23.65px"><span class="m">2018<i class="p">/</i>06<i class="p">/</i>28</span></div>
<div class="bar" style="left:823.70px;top:453.80px;width:7.95px;height:20.35px"></div>
<div class="td c" style="left:823.00px;top:451.80px;width:55.00px;height:23.65px"><span class="m">3</span><i class="gap"></i>年</div>
<div class="td c" style="left:878.00px;top:451.80px;width:55.00px;height:23.65px"><span class="m">2021<i class="p">/</i>06<i class="p">/</i>28</span></div>
<div class="td c" style="left:931.00px;top:451.80px;width:54.50px;height:23.65px"><span class="m">36</span></div>
<div class="td r" style="left:987.50px;top:451.80px;width:55.50px;height:23.65px"><span class="m">80<i class="p">.</i>83</span></div>
<div class="td w" style="left:1043.00px;top:451.80px;width:57.00px;height:23.65px"><span class="m">8</span></div>
<div class="rline" style="top:499.10px"></div>
<div class="td c" style="left:329.50px;top:475.45px;width:41.00px;height:23.65px"><span class="m">12</span></div>
<div class="td c" style="left:370.50px;top:475.45px;width:55.00px;height:23.65px"><span class="m"><i class="p u">F</i><i class="p">-</i>1012</span></div>
<div class="td c" style="left:425.50px;top:475.45px;width:55.00px;height:23.65px">通用设备</div>
<div class="td l" style="left:480.50px;top:475.45px;width:73.25px;height:23.65px">复印机</div>
<div class="td c" style="left:553.75px;top:475.45px;width:55.00px;height:23.65px"><span class="m"><i class="p s">*</i><i class="p s">*</i><i class="p s">*</i></span></div>
<div class="td c" style="left:608.75px;top:475.45px;width:40.75px;height:23.65px">台</div>
<div class="td r" style="left:649.50px;top:475.45px;width:59.75px;height:23.65px"><span class="m">3<i class="p">,</i>500<i class="p">.</i>00</span></div>
<div class="td r" style="left:709.25px;top:475.45px;width:59.50px;height:23.65px"><span class="m">70<i class="p">.</i>00</span></div>
<div class="td c" style="left:768.75px;top:475.45px;width:54.25px;height:23.65px"><span class="m">2020<i class="p">/</i>10<i class="p">/</i>15</span></div>
<div class="bar" style="left:823.70px;top:477.45px;width:7.95px;height:20.35px"></div>
<div class="td c" style="left:823.00px;top:475.45px;width:55.00px;height:23.65px"><span class="m">3</span><i class="gap"></i>年</div>
<div class="td c" style="left:878.00px;top:475.45px;width:55.00px;height:23.65px"><span class="m">2023<i class="p">/</i>10<i class="p">/</i>15</span></div>
<div class="td c" style="left:931.00px;top:475.45px;width:54.50px;height:23.65px"><span class="m">36</span></div>
<div class="td r" style="left:987.50px;top:475.45px;width:55.50px;height:23.65px"><span class="m">95<i class="p">.</i>28</span></div>
<div class="td w" style="left:1043.00px;top:475.45px;width:57.00px;height:23.65px"><span class="m">9</span></div>
<div class="rline" style="top:522.75px"></div>
<div class="td c" style="left:329.50px;top:499.10px;width:41.00px;height:23.65px"><span class="m">13</span></div>
<div class="td c" style="left:370.50px;top:499.10px;width:55.00px;height:23.65px"><span class="m"><i class="p u">F</i><i class="p">-</i>1013</span></div>
<div class="td c" style="left:425.50px;top:499.10px;width:55.00px;height:23.65px">专用设备</div>
<div class="td l" style="left:480.50px;top:499.10px;width:73.25px;height:23.65px">机床</div>
<div class="td c" style="left:553.75px;top:499.10px;width:55.00px;height:23.65px"><span class="m"><i class="p s">*</i><i class="p s">*</i><i class="p s">*</i></span></div>
<div class="td c" style="left:608.75px;top:499.10px;width:40.75px;height:23.65px">台</div>
<div class="td r" style="left:649.50px;top:499.10px;width:59.75px;height:23.65px"><span class="m">60<i class="p">,</i>000<i class="p">.</i>00</span></div>
<div class="td r" style="left:709.25px;top:499.10px;width:59.50px;height:23.65px"><span class="m">1<i class="p">,</i>800<i class="p">.</i>00</span></div>
<div class="td c" style="left:768.75px;top:499.10px;width:54.25px;height:23.65px"><span class="m">2019<i class="p">/</i>10<i class="p">/</i>15</span></div>
<div class="bar" style="left:823.70px;top:501.10px;width:26.50px;height:20.35px"></div>
<div class="td c" style="left:823.00px;top:499.10px;width:55.00px;height:23.65px"><span class="m">10</span><i class="gap"></i>年</div>
<div class="td c" style="left:878.00px;top:499.10px;width:55.00px;height:23.65px"><span class="m">2029<i class="p">/</i>10<i class="p">/</i>15</span></div>
<div class="td c" style="left:931.00px;top:499.10px;width:54.50px;height:23.65px"><span class="m">120</span></div>
<div class="td r" style="left:987.50px;top:499.10px;width:55.50px;height:23.65px"><span class="m">485<i class="p">.</i>00</span></div>
<div class="td w" style="left:1043.00px;top:499.10px;width:57.00px;height:23.65px"><span class="m">4</span></div>
<div class="rline" style="top:546.40px"></div>
<div class="td c" style="left:329.50px;top:522.75px;width:41.00px;height:23.65px"><span class="m">14</span></div>
<div class="td c" style="left:370.50px;top:522.75px;width:55.00px;height:23.65px"><span class="m"><i class="p u">F</i><i class="p">-</i>1014</span></div>
<div class="td c" style="left:425.50px;top:522.75px;width:55.00px;height:23.65px">通用设备</div>
<div class="td l" style="left:480.50px;top:522.75px;width:73.25px;height:23.65px">卡车</div>
<div class="td c" style="left:553.75px;top:522.75px;width:55.00px;height:23.65px"><span class="m"><i class="p s">*</i><i class="p s">*</i><i class="p s">*</i></span></div>
<div class="td c" style="left:608.75px;top:522.75px;width:40.75px;height:23.65px">辆</div>
<div class="td r" style="left:649.50px;top:522.75px;width:59.75px;height:23.65px"><span class="m">120<i class="p">,</i>000<i class="p">.</i>00</span></div>
<div class="td r" style="left:709.25px;top:522.75px;width:59.50px;height:23.65px"><span class="m">9<i class="p">,</i>600<i class="p">.</i>00</span></div>
<div class="td c" style="left:768.75px;top:522.75px;width:54.25px;height:23.65px"><span class="m">2019<i class="p">/</i>10<i class="p">/</i>01</span></div>
<div class="bar" style="left:823.70px;top:524.75px;width:10.60px;height:20.35px"></div>
<div class="td c" style="left:823.00px;top:522.75px;width:55.00px;height:23.65px"><span class="m">4</span><i class="gap"></i>年</div>
<div class="td c" style="left:878.00px;top:522.75px;width:55.00px;height:23.65px"><span class="m">2023<i class="p">/</i>10<i class="p">/</i>01</span></div>
<div class="td c" style="left:931.00px;top:522.75px;width:54.50px;height:23.65px"><span class="m">48</span></div>
<div class="td r" style="left:987.50px;top:522.75px;width:55.50px;height:23.65px"><span class="m">2<i class="p">,</i>425<i class="p">.</i>00</span></div>
<div class="td w" style="left:1043.00px;top:522.75px;width:57.00px;height:23.65px"><span class="m">2</span></div>
<div class="vline" style="left:370.00px;top:215.3px;height:331.10px"></div>
<div class="vline" style="left:425.00px;top:215.3px;height:331.10px"></div>
<div class="vline" style="left:480.00px;top:215.3px;height:331.10px"></div>
<div class="vline" style="left:553.25px;top:215.3px;height:331.10px"></div>
<div class="vline" style="left:608.25px;top:215.3px;height:331.10px"></div>
<div class="vline" style="left:649.00px;top:215.3px;height:331.10px"></div>
<div class="vline" style="left:708.75px;top:215.3px;height:331.10px"></div>
<div class="vline" style="left:768.25px;top:215.3px;height:331.10px"></div>
<div class="vline" style="left:822.50px;top:215.3px;height:331.10px"></div>
<div class="vline" style="left:877.50px;top:215.3px;height:331.10px"></div>
<div class="vline" style="left:932.50px;top:215.3px;height:331.10px"></div>
<div class="vline" style="left:987.00px;top:215.3px;height:331.10px"></div>
<div class="vline" style="left:1042.50px;top:215.3px;height:331.10px"></div>
<div class="a" style="left:329.5px;top:215px;width:41.5px;height:25px;border:2px solid #25875a"></div>
<div class="a" style="left:368.5px;top:237.5px;width:4px;height:4px;background:#1f8a5c;border:1px solid #fff"></div>
</div>
<div id="tabbar"></div>
<div id="bstrip"></div>
<svg class="a" style="left:0;top:0" width="1080" height="552" viewBox="0 0 1080 552" fill="none" stroke-linecap="round" stroke-linejoin="round">
<!-- banner icon -->
<circle cx="41.9" cy="98.1" r="14.6" fill="#f2c443"/>
<path d="M51 88 L56.5 96 A14.6 14.6 0 0 1 44 112.6 L36 108.3 Z" fill="#e3b23c" opacity="0.7"/>
<path d="M36.1 87.9 H46.5 L51 92.5 V108.3 H36.1 Z" fill="#f3f3f3"/>
<path d="M46.2 87.9 L51 92.7 H46.2 Z" fill="#38404a"/>
<path d="M38.5 95.5 H48.5 M38.5 98 H48.5 M38.5 100.5 H48.5 M38.5 103 H48.5 M38.5 105.5 H47" stroke="#d6d6d6" stroke-width="0.6"/>
<path d="M32.5 94 L40 106" stroke="#2f8db3" stroke-width="3.2" stroke-linecap="butt"/>
<path d="M31.6 92.6 L33.2 95.1" stroke="#2c3840" stroke-width="3.2" stroke-linecap="butt"/>
<path d="M39.8 105.6 L40.9 107.6" stroke="#e9d9b0" stroke-width="2" stroke-linecap="butt"/>
<!-- vertical scrollbar -->
<rect x="1064" y="72" width="10.3" height="462" fill="#e9ebee"/>
<rect x="1074.3" y="54" width="1" height="492" fill="#d3d6da"/>
<rect x="1075.3" y="54" width="4.7" height="492" fill="#eef0f2"/>
<path d="M1067.2 76.7 H1071.8" stroke="#b5b8bc" stroke-width="0.9"/>
<path d="M1067.8 85 L1069.5 82.3 L1071.2 85 Z" fill="#666"/>
<rect x="1067" y="92" width="4.8" height="26.5" rx="2.4" fill="#d0d3d7"/>
<path d="M1068 526.5 L1069.5 529 L1071 526.5 Z" fill="#777"/>
<!-- tab bar items -->
<path d="M1 538.5 L-1 541 L1 543.5" stroke="#999" stroke-width="0.9"/>
<path d="M12.8 538.5 L15 541 L12.8 543.5" stroke="#999" stroke-width="0.9"/>
<path d="M23.5 538.5 L25.7 541 L23.5 543.5 M27.5 538.5 V543.5" stroke="#999" stroke-width="0.9"/>
<rect x="36" y="534" width="34" height="13.5" fill="#fff"/>
<path d="M113.5 537 V546" stroke="#cfd3d8" stroke-width="0.8"/>
<path d="M120 539 V545 M117 542 H123" stroke="#222" stroke-width="1"/>
<path d="M625.6 539.5 V544" stroke="#999" stroke-width="0.8"/>
<path d="M635.8 540 L633.5 541.8 L635.8 543.6 Z" fill="#777"/>
<rect x="642.2" y="539.6" width="274" height="4.6" rx="2.3" fill="#c9ccd1"/>
<path d="M1051.5 540 L1053.8 541.8 L1051.5 543.6 Z" fill="#777"/>
<path d="M1062.5 539.5 V544" stroke="#999" stroke-width="0.8"/>
<!-- IME bar -->
<path d="M940.4 552 V549 Q940.4 546.3 943.5 546.3 H1080 V552 Z" fill="#fff"/>
<path d="M945.5 551 Q948 547.5 952.5 548.5" stroke="#f07b2a" stroke-width="2"/>
<path d="M962 548 V552" stroke="#ddd" stroke-width="0.8"/>
<path d="M968.5 550 H975.5 M972 547.5 V552 M969 549 V552 M975 549 V552" stroke="#222" stroke-width="1.15"/>
<path d="M985 552 L986.5 548.5 L988 552" stroke="#222" stroke-width="1.15"/>
<path d="M1000.5 552 V550.5 A3.5 3.5 0 0 1 1007.5 550.5 V552" stroke="#222" stroke-width="1.15"/>
<circle cx="1024" cy="549.5" r="1.6" stroke="#222" stroke-width="1.15"/>
<path d="M1036.5 552 V548.5 H1046 V552" stroke="#222" stroke-width="1.15"/>
<path d="M1054.5 552 L1056 549 L1060 548.5 L1063 550" stroke="#222" stroke-width="1.15"/>
<circle cx="1065" cy="548.2" r="2.3" fill="#f0502e"/>
<path d="M1072.5 552 V548.5 H1080" stroke="#222" stroke-width="1.15"/>
</svg>
<div class="a" style="left:43px;top:536.3px;font-size:7.3px;line-height:11px;color:#17804e">模板页</div>
<div class="a" style="left:78.5px;top:536.3px;font-size:7.3px;line-height:11px;color:#333">使用说明</div>
</body></html>
